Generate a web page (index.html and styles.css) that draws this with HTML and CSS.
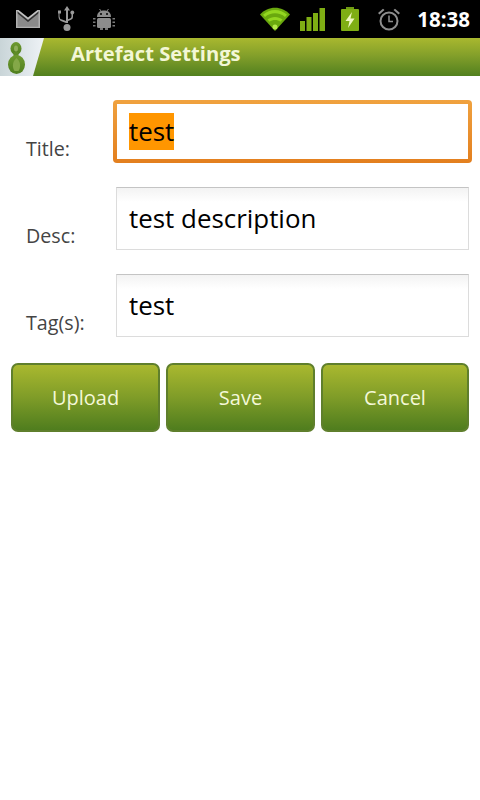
FILE: index.html
```html
<!DOCTYPE html>
<html lang="en">
<head>
    <meta charset="UTF-8">
    <meta name="viewport" content="width=device-width, initial-scale=1.0">
    <title>Artefact Settings</title>
    <link rel="stylesheet" href="styles.css">
</head>
<body>
    <div class="statusbar">
        <div class="status-left">
            <svg class="ic-mail" width="24" height="18" viewBox="0 0 24 18">
                <rect width="24" height="18" fill="#8a8a8a"/>
                <path d="M1 1 12 10 23 1V3L12 12 1 3Z" fill="#333"/>
                <path d="M0 0H24L12 9.500Z" fill="#c4c4c4"/>
                <path d="M2.500 0H21.500L12 7.500Z" fill="#000"/>
                <path d="M0 0H1.500V18H0ZM22.500 0H24V18H22.500ZM0 16.800H24V18H0Z" fill="#b0b0b0"/>
            </svg>
            <svg class="ic-usb" width="18" height="26" viewBox="0 0 18 26">
                <path d="M9 0 12 4.500H10V17H8V4.500H6Z" fill="#9a9a9a"/>
                <path d="M1.500 7V10.500Q1.500 13 4 13.500L8 15V17L3.500 15.200Q.5 14 .5 10.500V7Z" fill="#9a9a9a"/>
                <path d="M15 8V11Q15 13 13 13.800L9.500 15.200V13.500L12.500 12.200Q13.500 11.800 13.500 10.500V8Z" fill="#9a9a9a"/>
                <rect x="0" y="4.500" width="3" height="3" fill="#9a9a9a"/>
                <circle cx="14.300" cy="6.500" r="1.900" fill="#9a9a9a"/>
                <circle cx="9" cy="21.500" r="3.500" fill="#9a9a9a"/>
            </svg>
            <svg class="ic-android" width="22" height="21" viewBox="0 0 22 21">
                <path d="M4 8C4 3.500 7 1.500 11 1.500S18 3.500 18 8Z" fill="#8c8c8c"/>
                <path d="M6.500 0 8.500 2.500M15.500 0 13.500 2.500" stroke="#8c8c8c" fill="none"/>
                <rect x="4" y="9" width="14" height="10" rx="1.500" fill="#8c8c8c"/>
                <path d="M7 19H10V21H7ZM12 19H15V21H12Z" fill="#777"/>
                <path d="M0 9H2.500V10.500H0ZM0 12.500H2.500V14H0ZM0 16H2.500V17.500H0ZM19.500 9H22V10.500H19.500ZM19.500 12.500H22V14H19.500ZM19.500 16H22V17.500H19.500Z" fill="#7a7a7a"/>
                <circle cx="8" cy="5" r="1" fill="#000"/>
                <circle cx="14" cy="5" r="1" fill="#000"/>
            </svg>
        </div>
        <div class="status-right">
            <svg class="ic-wifi" width="30" height="24" viewBox="0 0 30 24">
                <path d="M0 7.500C8 -1.500 22 -1.500 30 7.500L15 24Z" fill="#6aa80e"/>
                <path d="M3 7.800C9.500 1.500 20.500 1.500 27 7.800L25 10C19.500 5 10.500 5 5 10Z" fill="#93d620"/>
                <path d="M7.500 12.500C11.500 9 18.500 9 22.500 12.500L20.500 14.700C17.500 12.300 12.500 12.300 9.500 14.700Z" fill="#93d620"/>
                <circle cx="15" cy="20" r="2.500" fill="#b5e84a"/>
            </svg>
            <svg class="ic-signal" width="25" height="23" viewBox="0 0 25 23">
                <rect x="0" y="13" width="5" height="10" fill="#7fae14"/>
                <rect x="6.500" y="9" width="5" height="14" fill="#7fae14"/>
                <rect x="13" y="5" width="5" height="18" fill="#7fae14"/>
                <rect x="19.500" y="0" width="5.500" height="23" fill="#7fae14"/>
            </svg>
            <svg class="ic-battery" width="18" height="24" viewBox="0 0 18 24">
                <rect x="5" y="0" width="8" height="3" fill="#6f9a12"/>
                <rect x="0" y="2" width="18" height="22" rx="1" fill="#7fae14"/>
                <path d="M11 5 4.500 14H8.500L7 21 13.500 11.500H9.500Z" fill="#eef7c0"/>
            </svg>
            <svg class="ic-alarm" width="22" height="23" viewBox="0 0 22 23">
                <circle cx="11" cy="13" r="8.500" fill="none" stroke="#8e8e8e" stroke-width="2"/>
                <path d="M11 7.500V13.500H15" fill="none" stroke="#8e8e8e" stroke-width="1.500"/>
                <path d="M0 5 5 .8 6.500 2 1.500 6.500ZM22 5 17 .8 15.500 2 20.500 6.500Z" fill="#8e8e8e"/>
            </svg>
            <span class="clock">18:38</span>
        </div>
    </div>

    <div class="titlebar">
        <svg class="logo" width="46" height="38" viewBox="0 0 46 38">
            <defs>
                <linearGradient id="tile" x1="0" y1="0" x2="1" y2="0">
                    <stop offset="0" stop-color="#c9d5d8"/>
                    <stop offset="1" stop-color="#eef2f6"/>
                </linearGradient>
                <linearGradient id="gourd" x1="0" y1="0" x2="0" y2="1">
                    <stop offset="0" stop-color="#6f9a30"/>
                    <stop offset="1" stop-color="#4f7f1e"/>
                </linearGradient>
            </defs>
            <path d="M0 0H44L33 38H0Z" fill="url(#tile)"/>
            <ellipse cx="16" cy="10.500" rx="5.500" ry="6.500" fill="url(#gourd)"/>
            <rect x="13.500" y="14" width="5" height="6" fill="#5f8c28"/>
            <ellipse cx="16.500" cy="26.500" rx="8.500" ry="9.500" fill="url(#gourd)"/>
            <ellipse cx="16" cy="10.500" rx="2" ry="3" fill="#8fae5a"/>
            <path d="M16.500 20C20 23 21.500 28 18.500 33H14.500C11.500 28 13 23 16.500 20Z" fill="#84a848"/>
        </svg>
        <h1 class="app-title">Artefact Settings</h1>
    </div>

    <div class="form">
        <div class="form-row">
            <label class="form-label">Title:</label>
            <div class="field field-focused"><span class="selected">test</span></div>
        </div>
        <div class="form-row">
            <label class="form-label">Desc:</label>
            <div class="field">test description</div>
        </div>
        <div class="form-row">
            <label class="form-label">Tag(s):</label>
            <div class="field">test</div>
        </div>
        <div class="buttons">
            <button class="btn">Upload</button>
            <button class="btn">Save</button>
            <button class="btn">Cancel</button>
        </div>
    </div>
</body>
</html>
```

FILE: styles.css
```css
html, body {
    margin: 0;
    padding: 0;
    background: #fff;
}
body {
    width: 480px;
    height: 800px;
    overflow: hidden;
    font-family: "Open Sans", "Noto Sans", sans-serif;
}
.statusbar {
    height: 38px;
    background: #000;
    display: flex;
    justify-content: space-between;
    align-items: center;
}
.status-left, .status-right {
    display: flex;
    align-items: center;
}
.status-left {
    padding-left: 16px;
}
.status-right {
    padding-right: 10px;
}
.ic-usb {
    margin-left: 18px;
}
.ic-android {
    margin-left: 17px;
}
.ic-signal {
    margin-left: 10px;
}
.ic-battery {
    margin-left: 16px;
}
.ic-alarm {
    margin-left: 19px;
}
.clock {
    margin-left: 17px;
    color: #fff;
    font-size: 20.500px;
    font-weight: 700;
    line-height: 38px;
}
.titlebar {
    height: 38px;
    display: flex;
    align-items: center;
    background: linear-gradient(#a9b82f, #84a02a 45%, #52801f);
}
.logo {
    flex: none;
}
.app-title {
    margin: 0 0 0 25px;
    padding-bottom: 8px;
    color: #f3f7d6;
    font-size: 20.200px;
    font-weight: 700;
}
.form {
    padding: 24px 11px 0;
}
.form-row {
    display: flex;
    align-items: flex-end;
    height: 63px;
    margin-bottom: 24px;
}
.form-label {
    width: 105px;
    padding-left: 15px;
    box-sizing: border-box;
    flex: none;
    color: #444;
    font-size: 19.700px;
    line-height: 28px;
}
.field {
    width: 353px;
    height: 63px;
    box-sizing: border-box;
    padding-left: 12px;
    border: 1px solid #dcdcdc;
    border-top-color: #c4c4c4;
    background: linear-gradient(#f3f3f3, #fff 14px);
    color: #000;
    font-size: 25.900px;
    line-height: 61px;
}
.field-focused {
    width: 359px;
    margin: 0 -3px;
    border: 4px solid transparent;
    border-radius: 4px;
    background: linear-gradient(#fff, #fff) padding-box, linear-gradient(#f0a23f, #e37f1e) border-box;
    line-height: 55px;
}
.selected {
    display: inline-block;
    background: #ff9600;
    line-height: 37px;
}
.buttons {
    display: grid;
    grid-template-columns: 149px 149px 148px;
    gap: 6px;
    margin-top: 26px;
}
.btn {
    height: 69px;
    padding: 0;
    border: 2px solid #5f7f2c;
    border-radius: 7px;
    background: linear-gradient(#a9b82f, #7f9c28 50%, #4f7d1e);
    color: #f4f8d8;
    font-family: inherit;
    font-size: 20px;
}
```
